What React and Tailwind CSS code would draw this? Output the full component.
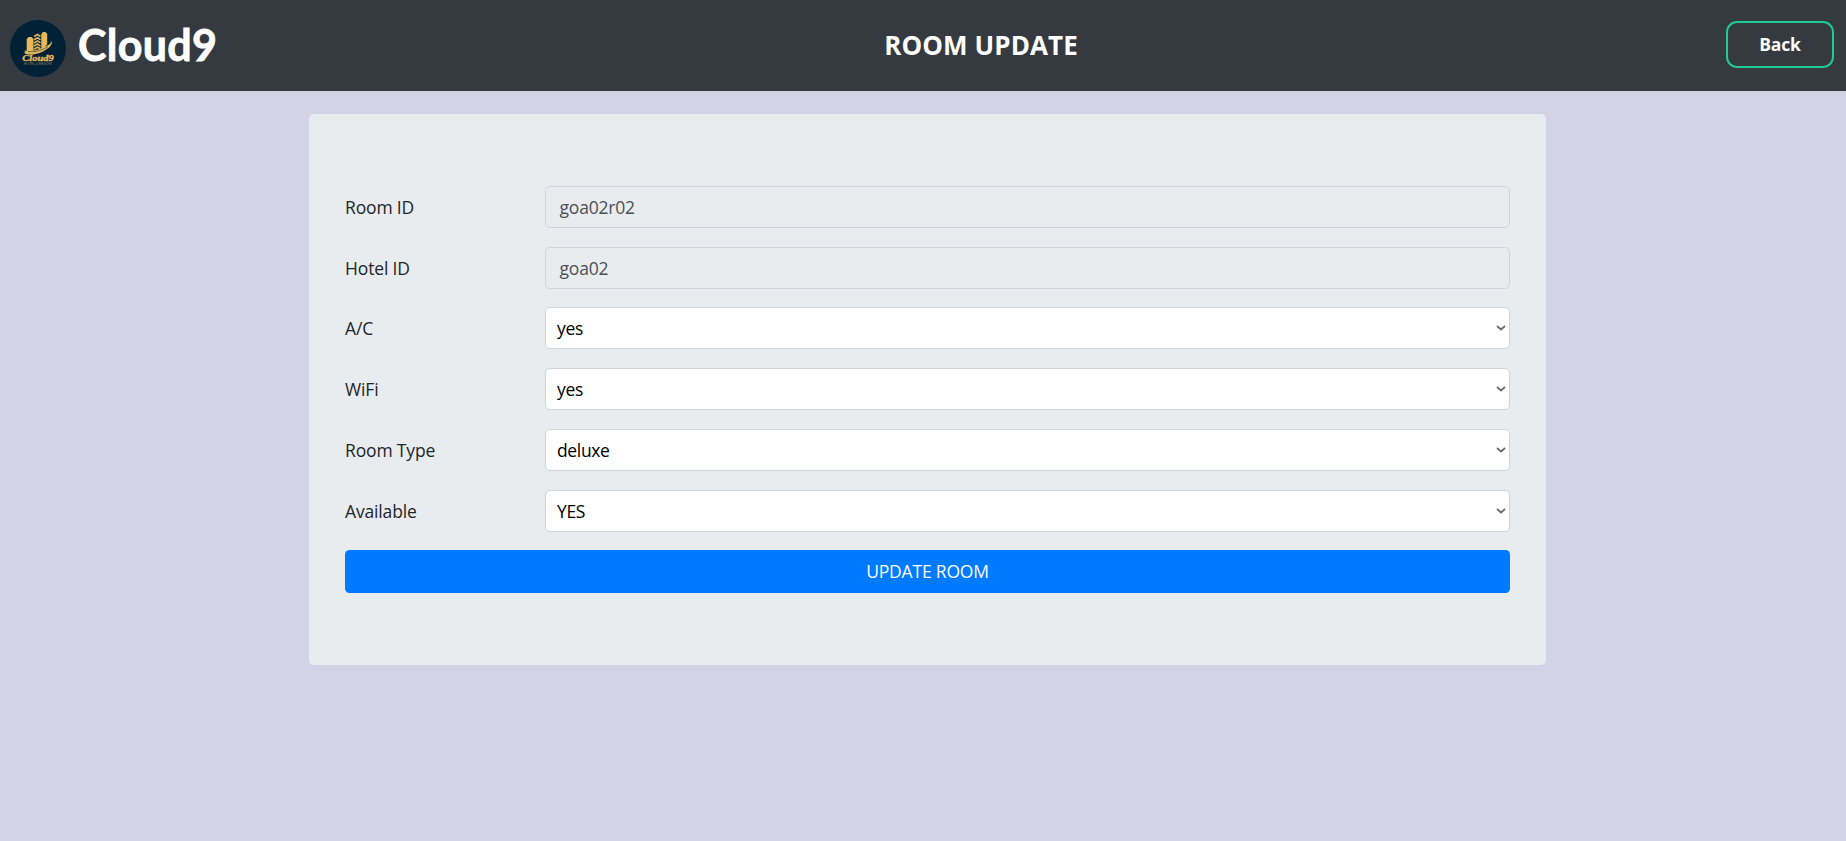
const disabledFields = [
  { label: "Room ID", value: "goa02r02" },
  { label: "Hotel ID", value: "goa02" },
];

const selectFields = [
  { label: "A/C", value: "yes" },
  { label: "WiFi", value: "yes" },
  { label: "Room Type", value: "deluxe" },
  { label: "Available", value: "YES" },
];

function LogoBadge() {
  return (
    <svg viewBox="0 0 56 57" className="h-[57px] w-14 shrink-0">
      <ellipse cx="28" cy="28.5" rx="28" ry="28.5" fill="#012136" />
      <g fill="#e5b95c">
        <path d="M16.700 31V19l2-2h3l1.800 2v12z" />
        <path d="M31.300 28V14l1.700-2h2.500l1.700 2v10l-3 4z" />
        <path d="M15.500 30.500c2 1.500 13 .8 24.500-6.500 1.200-1 1-2 .5-3 2.500 1 1.500 4-1.500 6.500-6 5-13 7.500-20 7-4.500-.2-5.500-2-3.500-4z" />
      </g>
      <path
        d="M24 16.500l3.500-2 3 2M24 19.700l3.500-2 3 2M24 22.900l3.500-2 3 2M24 26.100l3.500-2 3 2M24 29.300l3.500-2 3 1.500"
        fill="none"
        stroke="#d9b05a"
        strokeWidth="1.700"
      />
      <path d="M18 31.500c7 .8 14-.8 20-5" fill="none" stroke="#3c4238" strokeWidth="0.700" />
      <text
        x="12.300"
        y="40.800"
        textLength="31.500"
        lengthAdjust="spacingAndGlyphs"
        fontSize="7.800"
        fill="#e5b95c"
        stroke="#e5b95c"
        strokeWidth="0.300"
        className="font-['Liberation_Serif',serif] font-bold italic"
      >
        Cloud9
      </text>
      <text
        x="14"
        y="44.500"
        textLength="28.500"
        lengthAdjust="spacingAndGlyphs"
        fontSize="3"
        fill="#8f835c"
        className="font-['Liberation_Sans',sans-serif]"
      >
        HOTEL &amp; RESORT
      </text>
    </svg>
  );
}

function Label({ children }) {
  return <div className="w-[200px] shrink-0 text-[17.500px] tracking-[-0.15px] text-[#212529]">{children}</div>;
}

export default function App() {
  return (
    <div className="min-h-screen bg-[#d4d3e5] font-['Open_Sans',sans-serif]">
      <header className="flex h-[91px] items-center justify-between bg-[#343a40] pr-3 pl-2.5 text-white">
        <div className="flex w-[226px] items-center gap-3 pt-[5px]">
          <LogoBadge />
          <span className="-mt-2 font-['Lato',sans-serif] text-[43px] leading-none font-bold tracking-[0.3px] [-webkit-text-stroke:0.8px_white]">
            Cloud9
          </span>
        </div>
        <h1 className="-mt-0.5 text-[26px] leading-none font-bold tracking-[0.1px]">ROOM UPDATE</h1>
        <button className="-mt-0.5 h-[47px] w-[108px] rounded-[11px] border-2 border-[#20c997] text-[17.500px] font-bold tracking-[-0.2px]">
          Back
        </button>
      </header>

      <main className="mt-[23px] ml-[309px] flex h-[551px] w-[1237px] flex-col gap-[18px] rounded-[5px] bg-[#e9ecef] px-9 pt-[71.500px]">
        {disabledFields.map((f) => (
          <div key={f.label} className="flex h-[42.750px] items-center">
            <Label>{f.label}</Label>
            <div className="flex h-[42px] flex-1 items-center rounded-[5px] border border-[#ced4da] px-[13.500px] text-[17.500px] tracking-[-0.2px] text-[#495057]">
              {f.value}
            </div>
          </div>
        ))}
        {selectFields.map((f) => (
          <div key={f.label} className="flex h-[42.750px] items-center">
            <Label>{f.label}</Label>
            <div className="flex h-[42px] flex-1 items-center justify-between rounded-[5px] border border-[#ced4da] bg-white pr-[3px] pl-[11px] text-[17.500px] tracking-[-0.35px] text-black">
              {f.value}
              <svg viewBox="0 0 10 6" className="h-1.5 w-2.5">
                <path d="M1 1l4 3.500 4-3.500" fill="none" stroke="#6b6b6b" strokeWidth="1.700" />
              </svg>
            </div>
          </div>
        ))}
        <button className="h-[43px] w-full shrink-0 rounded-[4.500px] bg-[#007bff] text-[17.500px] tracking-[-0.2px] text-white">
          UPDATE ROOM
        </button>
      </main>
    </div>
  );
}
